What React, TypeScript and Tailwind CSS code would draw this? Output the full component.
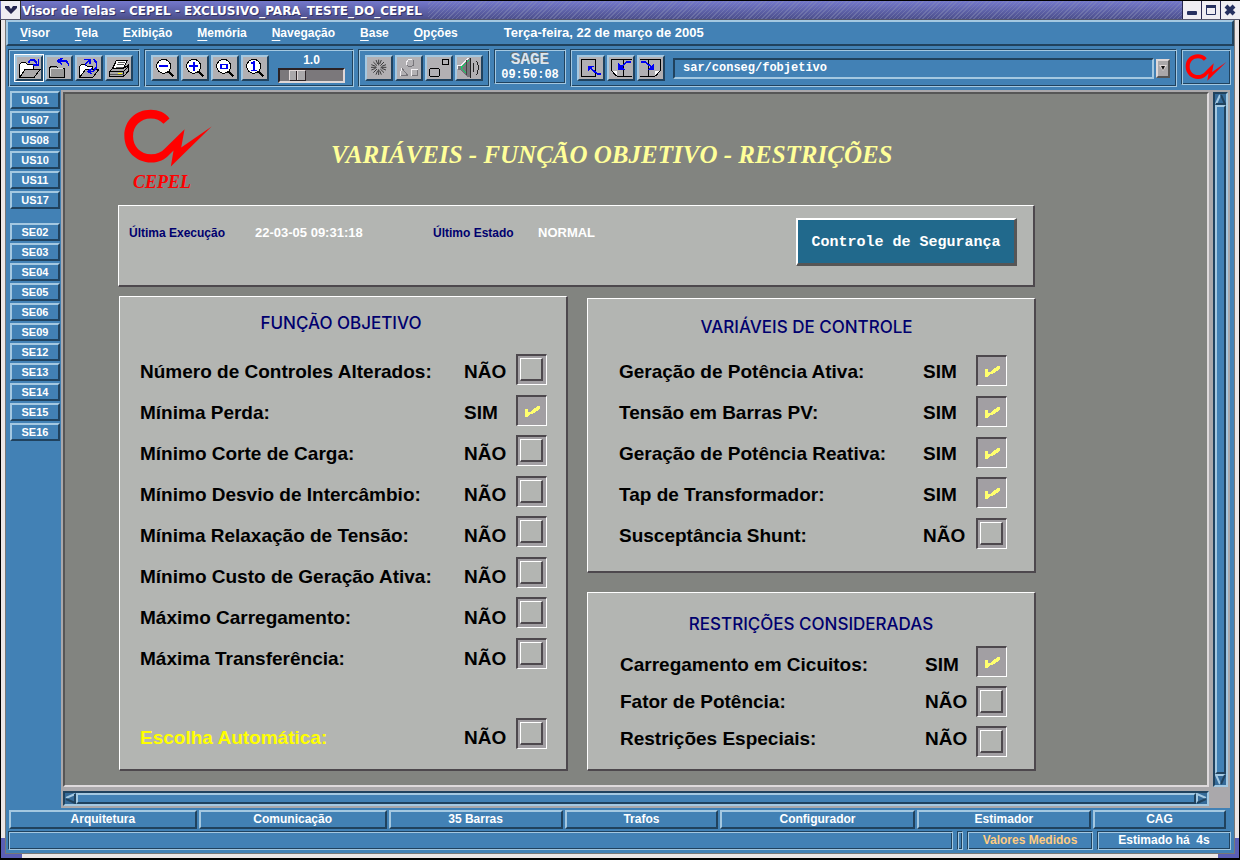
import { useId, useState } from 'react';
import type { ReactNode } from 'react';

const RAISED =
  'border-2 border-t-[#a4c8e1] border-l-[#a4c8e1] border-b-[#20425e] border-r-[#20425e] bg-[#4281b5]';
const ETCHED =
  'border border-t-[#20425e] border-l-[#20425e] border-b-[#a4c8e1] border-r-[#a4c8e1] shadow-[inset_1px_1px_0_#a4c8e1,inset_-1px_-1px_0_#20425e]';
const PANEL =
  'border-t border-l border-r-2 border-b-2 border-t-white border-l-white border-r-[#4d484d] border-b-[#4d484d] bg-[#b3b5b2]';

const menus = ['Visor', 'Tela', 'Exibição', 'Memória', 'Navegação', 'Base', 'Opções'];
const plants = ['US01', 'US07', 'US08', 'US10', 'US11', 'US17'];
const stations = ['SE02', 'SE03', 'SE04', 'SE05', 'SE06', 'SE09', 'SE12', 'SE13', 'SE14', 'SE15', 'SE16'];
const tabs: [string, string][] = [
  ['Arquitetura', 'grow-[188]'],
  ['Comunicação', 'grow-[188]'],
  ['35 Barras', 'grow-[174]'],
  ['Trafos', 'grow-[153]'],
  ['Configurador', 'grow-[195]'],
  ['Estimador', 'grow-[174]'],
  ['CAG', 'grow-[132]'],
];

function CepelMark({ className }: { className: string }) {
  return (
    <svg viewBox="374 71 263 173" className={className} aria-hidden="true">
      <path
        d="M510 99 C497 81 476 73 454 73 C408 73 375 106 375 151 C375 197 411 231 455 231 C480 231 495 222 507 210 L522 195 L514 243 L636 123 L545 186 L555 131 L497 188 C486 200 472 206 455 206 C424 206 401 183 401 152 C401 121 424 99 454 99 C470 99 482 104 492 115 Z"
        fill="#f00"
      />
    </svg>
  );
}

function ToolButton({ label, box, focused, children }: { label: string; box: string; focused?: boolean; children: ReactNode }) {
  return (
    <button
      type="button"
      aria-label={label}
      className={`h-[26px] w-7 shrink-0 border-2 border-t-[#a4c8e1] border-l-[#a4c8e1] border-b-[#20425e] border-r-[#20425e] bg-[#b2b0b3] ${focused ? 'outline-1 outline-white' : ''}`}
    >
      <svg viewBox={box} className="block h-[22px] w-6" fill="none" stroke="#000" strokeWidth="3" shapeRendering="crispEdges">
        {children}
      </svg>
    </button>
  );
}

function Lens({ children }: { children: ReactNode }) {
  return (
    <>
      <circle cx="491" cy="199" r="21" fill="#fff" />
      <path d="M506 214 L520 229" strokeWidth="6" />
      {children}
    </>
  );
}

function Check({ id, checked, onChange }: { id: string; checked: boolean; onChange: () => void }) {
  return (
    <span className="grid size-[31px]">
      <input
        id={id}
        type="checkbox"
        checked={checked}
        onChange={onChange}
        className="size-[31px] appearance-none border-t-2 border-l-2 border-r border-b border-t-[#4d484d] border-l-[#4d484d] border-r-white border-b-white bg-[#a29fa3] [grid-area:1/1]"
      />
      {checked ? (
        <svg viewBox="0 0 31 31" className="pointer-events-none size-[31px] [grid-area:1/1]" shapeRendering="crispEdges" aria-hidden="true">
          <path d="M9 14 H12 V17 H14 L19 13 L22 11 H24 V14 L18 18 L13 20 L11 22 H9 Z" fill="#ffff6e" />
        </svg>
      ) : (
        <span className="pointer-events-none m-1 size-[23px] border-t border-l border-r-2 border-b-2 border-t-white border-l-white border-r-[#4d484d] border-b-[#4d484d] bg-[#b3b5b2] [grid-area:1/1]" />
      )}
    </span>
  );
}

type Option = { label: string; on: boolean };

function OptionList({ options, row, columns, checkPad, highlight }: { options: Option[]; row: string; columns: string; checkPad: string; highlight?: boolean }) {
  const base = useId();
  const [values, setValues] = useState(options.map((o) => o.on));
  const toggle = (i: number) => setValues(values.map((v, k) => (k === i ? !v : v)));
  return (
    <div className={`grid ${columns} text-[19px] font-bold text-black`}>
      <div>
        {options.map((o, i) => (
          <label key={o.label} htmlFor={base + i} className={`flex items-center pt-0.5 whitespace-nowrap ${row} ${highlight ? 'text-[#ffff00]' : ''}`}>
            {o.label}
          </label>
        ))}
      </div>
      <div>
        {values.map((v, i) => (
          <div key={i} className={`flex items-center pt-0.5 ${row}`}>
            {v ? 'SIM' : 'NÃO'}
          </div>
        ))}
      </div>
      <div className={`flex flex-col justify-between ${checkPad}`}>
        {values.map((v, i) => (
          <Check key={i} id={base + i} checked={v} onChange={() => toggle(i)} />
        ))}
      </div>
    </div>
  );
}

function PanelTitle({ children }: { children: ReactNode }) {
  return <h2 className="text-center font-['Inter','Liberation_Sans',sans-serif] text-[17px] leading-5 font-medium text-[#00006e]">{children}</h2>;
}

const objective: Option[] = [
  { label: 'Número de Controles Alterados:', on: false },
  { label: 'Mínima Perda:', on: true },
  { label: 'Mínimo Corte de Carga:', on: false },
  { label: 'Mínimo Desvio de Intercâmbio:', on: false },
  { label: 'Mínima Relaxação de Tensão:', on: false },
  { label: 'Mínimo Custo de Geração Ativa:', on: false },
  { label: 'Máximo Carregamento:', on: false },
  { label: 'Máxima Transferência:', on: false },
];
const controls: Option[] = [
  { label: 'Geração de Potência Ativa:', on: true },
  { label: 'Tensão em Barras PV:', on: true },
  { label: 'Geração de Potência Reativa:', on: true },
  { label: 'Tap de Transformador:', on: true },
  { label: 'Susceptância Shunt:', on: false },
];
const restrictions: Option[] = [
  { label: 'Carregamento em Cicuitos:', on: true },
  { label: 'Fator de Potência:', on: false },
  { label: 'Restrições Especiais:', on: false },
];

function TitleBar() {
  return (
    <header className="flex h-5 shrink-0 border-t border-b border-t-black border-b-[#55556a] bg-linear-to-b from-[#7478cc] to-[#4c4f8c]">
      <button type="button" aria-label="Menu da janela" className="ml-px flex w-5 shrink-0 items-center justify-center border-r border-[#333] bg-[#efedf2]">
        <svg viewBox="0 0 14 10" className="h-[10px] w-[14px]">
          <path d="M1 1 H5 L7 4 L9 1 H13 V3 L7 9 L1 3 Z" fill="#26264f" />
        </svg>
      </button>
      <h1 className="pr-1.5 pl-px font-['DejaVu_Sans',sans-serif] text-xs leading-[20px] font-bold whitespace-nowrap text-white [text-shadow:1px_1px_0_#333366]">
        Visor de Telas - CEPEL - EXCLUSIVO_PARA_TESTE_DO_CEPEL
      </h1>
      <div className="grow bg-[repeating-linear-gradient(135deg,transparent_0_2px,#8a90b870_2px_3px)]" />
      <div className="flex gap-px bg-[#26264f] pl-px">
        <button type="button" aria-label="Minimizar" className="w-[18px] bg-[#efedf2]">
          <svg viewBox="0 0 18 18" className="size-[18px]"><rect x="4" y="10" width="10" height="4" rx="1" fill="#26305f" /></svg>
        </button>
        <button type="button" aria-label="Maximizar" className="w-[18px] bg-[#efedf2]">
          <svg viewBox="0 0 18 18" className="size-[18px]"><path d="M4.500 5 H13.500 V13.500 H4.500 Z M4 5.500 H14" fill="none" stroke="#26305f" strokeWidth="1" /><path d="M4 4H14V7H4Z" fill="#26305f" /></svg>
        </button>
        <button type="button" aria-label="Fechar" className="w-[19px] bg-[#efedf2]">
          <svg viewBox="0 0 18 18" className="size-[18px]"><path d="M5 5 L13 13 M13 5 L5 13" stroke="#26305f" strokeWidth="4" /></svg>
        </button>
      </div>
    </header>
  );
}

function Toolbar() {
  const group = `flex items-center ${ETCHED}`;
  return (
    <div className="mt-[3px] flex items-start gap-1 pr-[3px] pl-0.5">
      <div className={`${group} h-[38px] gap-0.5 px-1.5`}>
        <ToolButton label="Abrir" box="51 171 72 66" focused>
          <path d="M59 230 V193 L64 188 H78 L82 194 H101 V206" fill="#fff" />
          <path d="M60 231 L76 207 H121 L103 231 Z" fill="#aaa8aa" />
          <path d="M85 188 L92 180 H103 L111 190" stroke="#0000f5" strokeWidth="5" />
          <path d="M99 195 H116 V178" stroke="#0000f5" strokeWidth="4" />
        </ToolButton>
        <ToolButton label="Fechar tela" box="141 171 72 66">
          <path d="M149 231 V204 L154 198 H168 L173 204 H192 V231 Z" fill="#989898" />
          <path d="M152 228 V206 H189" stroke="#ddd" />
          <path d="M205 197 V191 L197 182 H180" stroke="#0000f5" strokeWidth="5" />
          <path d="M187 174 L173 183 L187 194" stroke="#0000f5" strokeWidth="5" />
        </ToolButton>
        <ToolButton label="Recarregar" box="231 171 72 66">
          <path d="M239 230 V199 L244 194 H258 L262 200 H276 V207" fill="#fff" />
          <path d="M240 231 L256 209 H296 L279 231 Z" fill="#aaa8aa" />
          <path d="M256 199 V192 L266 182 M253 178 H270 V192" stroke="#0000f5" strokeWidth="5" />
          <path d="M281 178 L289 187 V203 L279 214 H268 M275 206 L265 214 L275 222" stroke="#0000f5" strokeWidth="5" />
        </ToolButton>
        <ToolButton label="Imprimir" box="321 171 72 66">
          <path d="M337 207 L350 180 H382 L370 207 Z" fill="#fff" />
          <path d="M354 187 H374 M350 194 H371 M347 201 H368" strokeWidth="2" />
          <path d="M329 214 L338 204 H372 L384 196 V214 L371 230 H329 Z" fill="#aaa8aa" />
          <path d="M329 214 H371 V230 M371 214 L384 200" />
          <path d="M330 224 H371" stroke="#555" />
          <path d="M353 220 H366" stroke="#ffff00" />
        </ToolButton>
      </div>

      <div className={`${group} h-[38px] gap-0.5 pr-2 pl-1.5`}>
        <ToolButton label="Reduzir" box="459 171 72 66">
          <Lens><path d="M478 199 H504" stroke="#0000f5" strokeWidth="6" /></Lens>
        </ToolButton>
        <ToolButton label="Ampliar" box="459 171 72 66">
          <Lens><path d="M478 199 H504 M491 186 V212" stroke="#0000f5" strokeWidth="6" /></Lens>
        </ToolButton>
        <ToolButton label="Ampliar área" box="459 171 72 66">
          <Lens><rect x="482" y="193" width="18" height="12" stroke="#0000f5" strokeWidth="5" /></Lens>
        </ToolButton>
        <ToolButton label="Tamanho original" box="459 171 72 66">
          <Lens><path d="M483 191 L491 187 V211 M482 211 H501" stroke="#0000f5" strokeWidth="5" /></Lens>
        </ToolButton>
        <div className="ml-[7px] flex flex-col items-center">
          <label htmlFor="zoom" className="text-xs leading-[15px] font-bold">1.0</label>
          <input
            id="zoom"
            type="range"
            min="0"
            max="100"
            defaultValue="19"
            className="h-[15px] w-[67px] appearance-none border-2 border-t-[#2b2225] border-l-[#2b2225] border-r-[#e0d8d8] border-b-[#e0d8d8] bg-[#7b787b] [&::-webkit-slider-thumb]:h-[11px] [&::-webkit-slider-thumb]:w-[17px] [&::-webkit-slider-thumb]:appearance-none [&::-webkit-slider-thumb]:border [&::-webkit-slider-thumb]:border-t-[#e0d8d8] [&::-webkit-slider-thumb]:border-l-[#e0d8d8] [&::-webkit-slider-thumb]:border-r-[#2b2225] [&::-webkit-slider-thumb]:border-b-[#2b2225] [&::-webkit-slider-thumb]:bg-[linear-gradient(90deg,#aaa8aa_0_6px,#2b2225_6px_7px,#e0d8d8_7px_8px,#aaa8aa_8px)]"
          />
        </div>
      </div>

      <div className={`${group} h-[38px] gap-0.5 px-1.5`}>
        <ToolButton label="Congelar" box="51 171 72 66">
          <g strokeWidth="2" shapeRendering="auto">
            <path d="M86 179 V196 M86 208 V225 M63 202 H80 M92 202 H109 M70 186 L81 197 M91 207 L102 218 M102 186 L91 197 M81 207 L70 218" />
            <path d="M78 180 L83 192 M94 180 L89 192 M78 224 L83 212 M94 224 L89 212 M64 194 L77 199 M64 210 L77 205 M108 194 L95 199 M108 210 L95 205" />
          </g>
        </ToolButton>
        <ToolButton label="Formas" box="141 171 72 66">
          <circle cx="181" cy="189" r="11" stroke="#77757a" />
          <path d="M171 194 A11 11 0 0 1 187 180" stroke="#f3f0f3" />
          <path d="M150 227 L174 227 L155 204" stroke="#77757a" />
          <path d="M150 227 L155 204" stroke="#f3f0f3" />
          <path d="M185 227 H203 V208" stroke="#77757a" />
          <path d="M185 227 V208 H203" stroke="#f3f0f3" />
        </ToolButton>
        <ToolButton label="Agrupar" box="231 171 72 66">
          <rect x="277" y="178" width="18" height="15" />
          <path d="M241 206 H266 L269 209 V226 L266 230 H241 L238 226 V209 Z" />
        </ToolButton>
        <ToolButton label="Som" box="321 171 72 66">
          <path d="M323 197 H333 L352 174 H360 V231 H352 L333 211 H323 Z" fill="#77757a" stroke="none" />
          <path d="M323 207 V197 H333 L355 174" stroke="#f3f0f3" />
          <path d="M334 202 L356 181 M334 205 L350 222" stroke="#00e060" />
          <path d="M349 181 V225" stroke="#444" />
          <path d="M360 174 V234" stroke="#222" />
          <path d="M369 189 Q375 202 369 216 M380 182 Q390 202 380 224" stroke="#222" />
        </ToolButton>
      </div>

      <div className={`flex h-[35px] w-[72px] flex-col items-center font-['Liberation_Mono',monospace] font-bold ${ETCHED}`}>
        <span className="mt-0.5 text-base leading-4 text-[#dbe6ee] [text-shadow:-1px_-1px_0_#6b6b6b]">SAGE</span>
        <time className="text-xs leading-[14px]">09:50:08</time>
      </div>

      <div className={`${group} h-[38px] min-w-0 grow gap-0.5 pr-1.5 pl-1.5`}>
        <ToolButton label="Tela anterior" box="687 171 72 66">
          <rect x="694" y="179" width="43" height="50" />
          <path d="M753 222 H743 L720 204" stroke="#0000f5" strokeWidth="5" />
          <path d="M714 198 H730 L714 213 Z" fill="#0000f5" stroke="#0000f5" />
        </ToolButton>
        <ToolButton label="Página anterior" box="777 171 72 66">
          <path d="M785 212 H800 V229 L785 212" fill="#fff" stroke="none" />
          <path d="M785 212 V179 H847 M800 229 H847 M821 179 V229 M785 212 L800 229" />
          <path d="M843 185 H832 L814 200" stroke="#0000f5" strokeWidth="5" />
          <path d="M806 193 V209 H822 Z" fill="#0000f5" stroke="#0000f5" />
        </ToolButton>
        <ToolButton label="Próxima página" box="867 171 72 66">
          <path d="M931 212 H916 V229 L931 212" fill="#fff" stroke="none" />
          <path d="M931 212 V179 H869 M916 229 H869 M896 179 V229 M931 212 L916 229" />
          <path d="M873 185 H884 L904 200" stroke="#0000f5" strokeWidth="5" />
          <path d="M911 193 V209 H895 Z" fill="#0000f5" stroke="#0000f5" />
        </ToolButton>
        <input
          aria-label="Endereço da tela"
          defaultValue="sar/conseg/fobjetivo"
          className="ml-1.5 h-[21px] min-w-0 grow border-2 border-t-[#20425e] border-l-[#20425e] border-r-[#a4c8e1] border-b-[#a4c8e1] bg-[#4281b5] px-2 font-['Liberation_Mono',monospace] text-xs font-bold text-white outline-none"
        />
        <button type="button" aria-label="Histórico" className="flex h-[19px] w-[14px] items-center justify-center border-2 border-t-[#e0d8d8] border-l-[#e0d8d8] border-r-[#555] border-b-[#555] bg-[#aaa8aa]">
          <svg viewBox="0 0 8 6" className="h-1.5 w-2 shrink-0"><path d="M0 0 H8 L4 6 Z" fill="#e0d8d8" /><path d="M2 1 H6 L4 5 Z" fill="#111" /></svg>
        </button>
      </div>

      <div className={`flex h-9 w-[50px] items-center justify-center ${ETCHED}`}>
        <CepelMark className="h-[27px] w-[42px]" />
      </div>
    </div>
  );
}

function SideButton({ children }: { children: string }) {
  return (
    <button type="button" className={`h-[18px] w-full text-[11px] leading-[14px] font-bold text-white ${RAISED}`}>
      {children}
    </button>
  );
}

function Arrow({ d, shade, label }: { d: string; shade: string; label: string }) {
  return (
    <button type="button" aria-label={label} className="flex size-[11px] shrink-0 items-center justify-center">
      <svg viewBox="0 0 11 11" className="size-[11px]" fill="none" strokeWidth="2">
        <path d={d} stroke="#a4c8e1" />
        <path d={shade} stroke="#20425e" />
      </svg>
    </button>
  );
}

const TROUGH =
  'border-2 border-t-[#20425e] border-l-[#20425e] border-r-[#a4c8e1] border-b-[#a4c8e1] bg-[#356a98]';

function Screen() {
  return (
    <main className="min-h-0 min-w-0 overflow-hidden border-2 border-t-[#565656] border-l-[#565656] border-r-[#dedadc] border-b-[#dedadc] bg-[#828480] pt-[15px] pl-[53px]">
      <div className="w-full max-w-[918px]">
        <div className="flex h-24 items-start pl-1.5">
          <div className="flex w-[88px] flex-col">
            <CepelMark className="h-[58px] w-[88px]" />
            <span className="mt-1 pl-[9px] font-['Liberation_Serif',serif] text-[18px] leading-[22px] font-bold text-[#f00] italic">CEPEL</span>
          </div>
          <h2 className="mt-8 ml-[119px] font-['Liberation_Serif',serif] text-[25px] leading-7 font-bold whitespace-nowrap text-[#ffff99] italic">
            VARIÁVEIS - FUNÇÃO OBJETIVO - RESTRIÇÕES
          </h2>
        </div>

        <section className={`mr-px flex h-[82px] items-start pt-3 pr-4 pl-2.5 text-[13px] ${PANEL}`}>
          <dl className="flex items-center pt-[7px] leading-4 font-bold">
            <dt className="w-[126px] text-xs text-[#00006e]">Última Execução</dt>
            <dd className="w-[178px] text-white">22-03-05 09:31:18</dd>
            <dt className="w-[105px] text-xs text-[#00006e]">Último Estado</dt>
            <dd className="text-white">NORMAL</dd>
          </dl>
          <button
            type="button"
            className="ml-auto h-12 w-[221px] border-t-2 border-r-3 border-b-3 border-l-2 border-t-white border-r-[#565656] border-b-[#565656] border-l-white bg-[#21698c] pt-1 font-['Liberation_Mono',monospace] text-[15px] font-bold text-white"
          >
            Controle de Segurança
          </button>
        </section>

        <div className="mt-[9px] grid grid-cols-2 gap-[19px] pl-px">
          <section className={`pt-4 pl-5 ${PANEL}`}>
            <div className="pr-6"><PanelTitle>FUNÇÃO OBJETIVO</PanelTitle></div>
            <div className="mt-[18px]">
              <OptionList options={objective} row="h-[41px]" columns="grid-cols-[324px_52px_31px]" checkPad="pt-[3px] pb-2.5" />
            </div>
            <div className="mt-[38px]">
              <OptionList options={[{ label: 'Escolha Automática:', on: false }]} row="h-[41px]" columns="grid-cols-[324px_52px_31px]" checkPad="pt-px" highlight />
            </div>
          </section>
          <div className="mt-0.5 flex flex-col gap-[19px]">
            <section className={`h-[275px] pt-[18px] pl-[31px] ${PANEL}`}>
              <div className="pr-10"><PanelTitle>VARIÁVEIS DE CONTROLE</PanelTitle></div>
              <div className="mt-3.5">
                <OptionList options={controls} row="h-[41px]" columns="grid-cols-[304px_53px_31px]" checkPad="pt-1 pb-[7px]" />
              </div>
            </section>
            <section className={`h-[179px] pt-[21px] pl-8 ${PANEL}`}>
              <div className="pr-8"><PanelTitle>RESTRIÇÕES CONSIDERADAS</PanelTitle></div>
              <div className="mt-3">
                <OptionList options={restrictions} row="h-[37px]" columns="grid-cols-[305px_51px_31px]" checkPad="" />
              </div>
            </section>
          </div>
        </div>
      </div>
    </main>
  );
}

export default function App() {
  return (
    <div className="flex h-screen flex-col overflow-hidden bg-[#4281b5] font-['Liberation_Sans',Arial,sans-serif] text-white">
      <TitleBar />
      <div className="flex min-h-0 grow border-x border-b-2 border-black bg-[#ebe6e6] bg-[linear-gradient(#5a5fb5,#5a5fb5),linear-gradient(#5a5fb5,#5a5fb5)] bg-[size:21px_20px] bg-[position:left_bottom,right_bottom] bg-no-repeat px-1 pb-1">
        <div className="flex min-w-0 grow flex-col border-x border-b border-[#777] bg-[#4281b5]">
          <nav className={`flex h-[26px] shrink-0 items-center gap-[25px] pl-3 text-[12px] font-bold ${RAISED}`}>
            {menus.map((m) => (
              <button key={m} type="button">
                <span className="underline decoration-1 underline-offset-3">{m[0]}</span>
                {m.slice(1)}
              </button>
            ))}
            <span className="ml-[21px] text-[13px]">Terça-feira, 22 de março de 2005</span>
          </nav>
          <Toolbar />

          <div className="mt-[3px] flex min-h-0 grow pr-1 pl-1">
            <aside className="flex w-[50px] shrink-0 flex-col gap-0.5 pt-px">
              {plants.map((p) => <SideButton key={p}>{p}</SideButton>)}
              <div className="h-2.5" />
              {stations.map((s) => <SideButton key={s}>{s}</SideButton>)}
            </aside>
            <div className="ml-px grid min-w-0 grow grid-cols-[minmax(0,1fr)_15px] grid-rows-[minmax(0,1fr)_15px] gap-1 bg-[#aaa8ab] p-0.5">
              <Screen />
              <div className={`flex flex-col ${TROUGH}`}>
                <Arrow label="Subir" d="M1 10 L5 1" shade="M6 1 L10 10 H1" />
                <div className={`grow ${RAISED}`} />
                <Arrow label="Descer" d="M10 1 H1 L5 10" shade="M6 10 L10 1" />
              </div>
              <div className={`flex ${TROUGH}`}>
                <Arrow label="Esquerda" d="M10 1 L1 5" shade="M1 6 L10 10 V1" />
                <div className={`grow ${RAISED}`} />
                <Arrow label="Direita" d="M1 10 V1 L10 5" shade="M10 6 L1 10" />
              </div>
            </div>
          </div>

          <div className="mt-0.5 flex shrink-0 gap-0.5 pr-2 pl-[3px]">
            {tabs.map(([name, grow]) => (
              <button key={name} type="button" className={`h-[19px] min-w-0 basis-0 text-xs leading-[15px] font-bold ${grow} ${RAISED}`}>
                {name}
              </button>
            ))}
          </div>
          <footer className="mt-0.5 mb-[3px] flex h-[19px] shrink-0 gap-1 pr-[3px] pl-0.5 text-center text-xs leading-[17px] font-bold">
            <div className={`grow ${ETCHED}`} />
            <div className={`w-1.5 ${ETCHED}`} />
            <div className={`w-[126px] text-[#ffcc80] ${ETCHED}`}>Valores Medidos</div>
            <div className={`w-[134px] whitespace-pre ${ETCHED}`}>Estimado há  4s</div>
          </footer>
        </div>
      </div>
    </div>
  );
}
